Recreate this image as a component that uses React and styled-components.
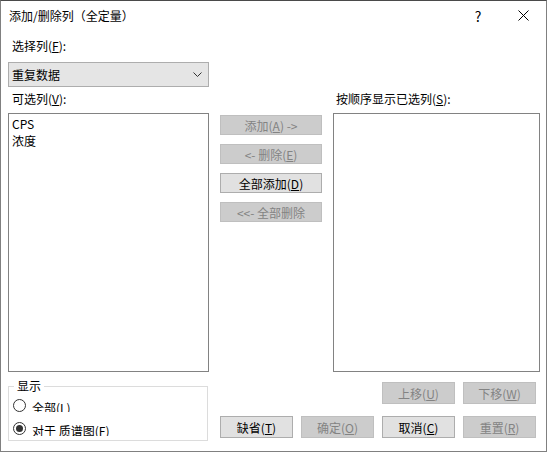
import React from 'react';
import styled, { createGlobalStyle } from 'styled-components';

const GlobalStyle = createGlobalStyle`
  body {
    margin: 0;
    background: #fff;
    font-family: "Segoe UI", "Noto Sans CJK SC", sans-serif;
    font-size: 12px;
    color: #000;
  }
`;

const Window = styled.div`
  box-sizing: border-box;
  width: 547px;
  height: 452px;
  background: #fff;
  border: 1px solid #808080;
  border-top-color: #4a4a4a;
  display: flex;
  flex-direction: column;
`;

const TitleBar = styled.div`
  height: 29px;
  display: flex;
  align-items: center;
  padding-left: 8px;
`;

const Title = styled.span`
  flex: 1;
  line-height: 16px;
`;

const CaptionButton = styled.div`
  width: 46px;
  height: 29px;
  display: flex;
  align-items: center;
  justify-content: center;
  font-size: 14px;
  padding-left: ${(p) => p.$shift || 0}px;
  box-sizing: border-box;
`;

const Body = styled.div`
  display: grid;
  grid-template-columns: 201px 102px 207px;
  column-gap: 11px;
  padding-left: 7px;
`;

const Label = styled.div`
  grid-column: ${(p) => p.$col || '1 / -1'};
  line-height: 16px;
  margin-top: ${(p) => p.$top || 0}px;
  padding-left: ${(p) => p.$indent || 4}px;
  white-space: nowrap;
`;

const Select = styled.div`
  grid-column: 1;
  box-sizing: border-box;
  height: 25px;
  margin-top: 8px;
  background: #e5e5e5;
  border: 1px solid #adadad;
  display: flex;
  align-items: center;
  justify-content: space-between;
  padding: 0 6px 0 3px;
`;

const ListBox = styled.div`
  box-sizing: border-box;
  height: 259px;
  margin-top: 6px;
  border: 1px solid #828282;
  background: #fff;
  padding: 1px 3px;
`;

const ListItem = styled.div`
  line-height: 17px;
`;

const ButtonStack = styled.div`
  margin-top: 8px;
  display: flex;
  flex-direction: column;
  gap: 9px;
`;

const Button = styled.div`
  box-sizing: border-box;
  height: ${(p) => p.$h || 22}px;
  display: flex;
  align-items: center;
  justify-content: center;
  white-space: nowrap;
  background: ${(p) => (p.disabled ? '#cccccc' : '#e1e1e1')};
  border: 1px solid ${(p) => (p.disabled ? '#bfbfbf' : '#adadad')};
  color: ${(p) => (p.disabled ? '#838383' : '#000')};
  grid-column: ${(p) => p.$col || 'auto'};
`;

const Group = styled.fieldset`
  grid-column: 1;
  align-self: start;
  margin: 6px 0 0 0;
  padding: 0 0 0 5px;
  height: 63px;
  box-sizing: border-box;
  width: 200px;
  border: 1px solid #dcdcdc;
`;

const Legend = styled.legend`
  padding: 0 3px;
  line-height: 16px;
`;

const RadioRow = styled.div`
  height: 23px;
  display: flex;
  align-items: center;
  gap: 6px;
  margin-left: -1px;
`;

const RadioDot = styled.span`
  box-sizing: border-box;
  width: 13px;
  height: 13px;
  border-radius: 50%;
  border: 1px solid #333;
  display: inline-flex;
  align-items: center;
  justify-content: center;

  &::after {
    content: '';
    width: 7px;
    height: 7px;
    border-radius: 50%;
    background: ${(p) => (p.$checked ? '#333' : 'transparent')};
  }
`;

const RadioText = styled.span`
  height: ${(p) => p.$clip}px;
  line-height: 17px;
  overflow: hidden;
  white-space: nowrap;
`;

const BottomButtons = styled.div`
  grid-column: 2 / 4;
  align-self: start;
  margin-top: 10px;
  display: grid;
  grid-template-columns: repeat(4, 73px);
  column-gap: 8px;
  row-gap: 12px;
`;

const Chevron = () => (
  <svg width="9" height="5" viewBox="0 0 9 5">
    <polyline points="0.5,0.5 4.5,4.5 8.5,0.5" fill="none" stroke="#333" strokeWidth="1" />
  </svg>
);

const CloseIcon = () => (
  <svg width="11" height="11" viewBox="0 0 11 11">
    <line x1="0.5" y1="0.5" x2="10.5" y2="10.5" stroke="#000" strokeWidth="1" />
    <line x1="10.5" y1="0.5" x2="0.5" y2="10.5" stroke="#000" strokeWidth="1" />
  </svg>
);

const App = () => {
  return (
    <Window>
      <GlobalStyle />
      <TitleBar>
        <Title>添加/删除列（全定量）</Title>
        <CaptionButton $shift={2}>?</CaptionButton>
        <CaptionButton>
          <CloseIcon />
        </CaptionButton>
      </TitleBar>
      <Body>
        <Label $top={8}>
          选择列(<u>F</u>):
        </Label>
        <Select>
          <span>重复数据</span>
          <Chevron />
        </Select>
        <Label $col="1" $top={4}>
          可选列(<u>V</u>):
        </Label>
        <Label $col="3" $top={4} $indent={3}>
          按顺序显示已选列(<u>S</u>):
        </Label>
        <ListBox>
          <ListItem>CPS</ListItem>
          <ListItem>浓度</ListItem>
        </ListBox>
        <ButtonStack>
          <Button $h={20} disabled>
            添加(<u>A</u>)&nbsp;-&gt;
          </Button>
          <Button $h={20} disabled>
            &lt;-&nbsp;删除(<u>E</u>)
          </Button>
          <Button $h={20}>
            全部添加(<u>D</u>)
          </Button>
          <Button $h={20} disabled>
            &lt;&lt;-&nbsp;全部删除
          </Button>
        </ButtonStack>
        <ListBox />
        <Group>
          <Legend>显示</Legend>
          <RadioRow>
            <RadioDot />
            <RadioText $clip={13}>
              全部(<u>L</u>)
            </RadioText>
          </RadioRow>
          <RadioRow>
            <RadioDot $checked />
            <RadioText $clip={14}>
              对于 质谱图(<u>F</u>)
            </RadioText>
          </RadioRow>
        </Group>
        <BottomButtons>
          <Button $col="3" disabled>
            上移(<u>U</u>)
          </Button>
          <Button $col="4" disabled>
            下移(<u>W</u>)
          </Button>
          <Button>
            缺省(<u>T</u>)
          </Button>
          <Button disabled>
            确定(<u>O</u>)
          </Button>
          <Button>
            取消(<u>C</u>)
          </Button>
          <Button disabled>
            重置(<u>R</u>)
          </Button>
        </BottomButtons>
      </Body>
    </Window>
  );
};

export default App;
